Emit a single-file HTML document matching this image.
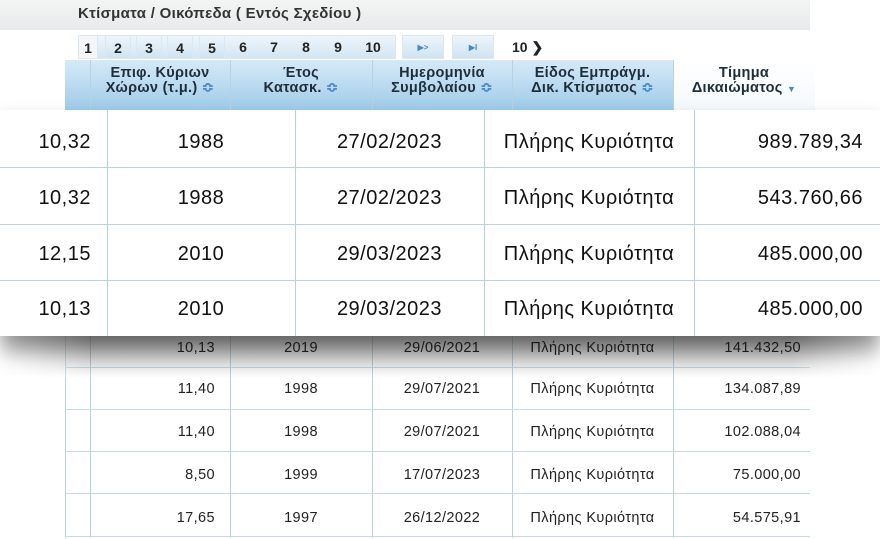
<!DOCTYPE html>
<html><head><meta charset="utf-8"><style>
*{margin:0;padding:0;box-sizing:border-box}
body{width:880px;height:539px;overflow:hidden;background:#fff;position:relative;font-family:"Liberation Sans",Arial,sans-serif;color:#222}
.a{position:absolute}
.title{left:0;top:0;width:810px;height:30px;background:linear-gradient(#f3f4f4,#e8eaeb)}
.title span{position:absolute;left:78px;top:5px;font-size:15px;font-weight:bold;color:#333;letter-spacing:.3px}
.pg{top:35px;height:24px;font-size:14px;font-weight:bold;text-align:center;line-height:24px;background:linear-gradient(#eef5fb,#cfe3f2);border:1px solid #dbe8f2}
.hd{left:65px;top:60px;width:745px;height:50px;background:linear-gradient(#d6eaf8,#9fcbe9)}
.hc{top:66px;font-size:14.5px;font-weight:bold;text-align:center;line-height:15px;color:#1e2d3a;letter-spacing:.3px}
.vl{width:1px;background:#b9d2e0}
.bt{font-size:14.5px;color:#222;letter-spacing:.4px}
.hl{height:1px;background:#c4dbe6}
.card{left:0;top:110px;width:880px;height:226px;background:#fff;box-shadow:0 14px 20px rgba(0,0,0,.4)}
.ct{font-size:20px;color:#111;position:absolute;letter-spacing:.5px}
</style></head><body>
<div class="a title"><span>Κτίσματα / Οικόπεδα ( Εντός Σχεδίου )</span></div>
<div class="a pg" style="left:78px;width:318px;background:linear-gradient(#eef5fb,#d3e6f4)"></div>
<div class="a pg" style="left:78px;width:20px;background:#f4f6f7">1</div>
<div class="a pg" style="left:105px;width:26px">2</div>
<div class="a pg" style="left:136px;width:26px">3</div>
<div class="a pg" style="left:167px;width:26px">4</div>
<div class="a pg" style="left:199px;width:26px">5</div>
<div class="a pg" style="left:230px;width:26px;border:none;background:none">6</div>
<div class="a pg" style="left:261px;width:26px;border:none;background:none">7</div>
<div class="a pg" style="left:293px;width:26px;border:none;background:none">8</div>
<div class="a pg" style="left:325px;width:26px;border:none;background:none">9</div>
<div class="a pg" style="left:357px;width:32px;border:none;background:none">10</div>
<div class="a pg" style="left:402px;width:42px;font-size:8px;color:#4a88c8">▶&gt;</div>
<div class="a pg" style="left:452px;width:42px;font-size:8px;color:#4a88c8">▶I</div>
<div class="a pg" style="left:512px;width:50px;background:#fff;border:none;text-align:left">10 ❯</div>
<div class="a hd"></div>
<div class="a" style="left:673px;top:60px;width:142px;height:50px;background:linear-gradient(#fff,#f4f9fd)"></div>
<div class="a vl" style="left:90px;top:60px;height:50px"></div>
<div class="a vl" style="left:230px;top:60px;height:50px"></div>
<div class="a vl" style="left:372px;top:60px;height:50px"></div>
<div class="a vl" style="left:512px;top:60px;height:50px"></div>
<div class="a vl" style="left:673px;top:60px;height:50px"></div>
<div class="a hc" style="left:90px;width:140px">Επιφ. Κύριων<br>Χώρων (τ.μ.) <span style="color:#4a88c8">≎</span></div>
<div class="a hc" style="left:230px;width:142px">Έτος<br>Κατασκ. <span style="color:#4a88c8">≎</span></div>
<div class="a hc" style="left:372px;width:140px">Ημερομηνία<br>Συμβολαίου <span style="color:#4a88c8">≎</span></div>
<div class="a hc" style="left:512px;width:161px">Είδος Εμπράγμ.<br>Δικ. Κτίσματος <span style="color:#4a88c8">≎</span></div>
<div class="a hc" style="left:673px;width:142px">Τίμημα<br>Δικαιώματος <span style="color:#4a88c8;font-size:9px">▼</span></div>

<div class="a vl" style="left:65px;top:336px;height:202px"></div>
<div class="a vl" style="left:90px;top:336px;height:202px"></div>
<div class="a vl" style="left:230px;top:336px;height:202px"></div>
<div class="a vl" style="left:372px;top:336px;height:202px"></div>
<div class="a vl" style="left:512px;top:336px;height:202px"></div>
<div class="a vl" style="left:673px;top:336px;height:202px"></div>
<div class="a hl" style="left:65px;top:367px;width:745px"></div>
<div class="a hl" style="left:65px;top:409px;width:745px"></div>
<div class="a hl" style="left:65px;top:451px;width:745px"></div>
<div class="a hl" style="left:65px;top:493px;width:745px"></div>
<div class="a hl" style="left:65px;top:536px;width:745px"></div>
<div class="a" style="left:0;top:336px;width:880px;height:42px;background:linear-gradient(rgba(110,110,110,.6),rgba(255,255,255,0))"></div>
<div class="a" style="left:0;top:336px;width:90px;height:42px;background:linear-gradient(90deg,#fff,rgba(255,255,255,0))"></div>
<div class="a" style="left:790px;top:336px;width:90px;height:42px;background:linear-gradient(90deg,rgba(255,255,255,0),#fff)"></div>

<div class="a bt" style="left:90px;top:340px;width:125px;text-align:right">
<div style="height:41px">10,13</div><div style="height:43px">11,40</div><div style="height:43px">11,40</div><div style="height:43px">8,50</div><div>17,65</div></div>
<div class="a bt" style="left:230px;top:340px;width:142px;text-align:center">
<div style="height:41px">2019</div><div style="height:43px">1998</div><div style="height:43px">1998</div><div style="height:43px">1999</div><div>1997</div></div>
<div class="a bt" style="left:372px;top:340px;width:140px;text-align:center">
<div style="height:41px">29/06/2021</div><div style="height:43px">29/07/2021</div><div style="height:43px">29/07/2021</div><div style="height:43px">17/07/2023</div><div>26/12/2022</div></div>
<div class="a bt" style="left:512px;top:340px;width:161px;text-align:center">
<div style="height:41px">Πλήρης Κυριότητα</div><div style="height:43px">Πλήρης Κυριότητα</div><div style="height:43px">Πλήρης Κυριότητα</div><div style="height:43px">Πλήρης Κυριότητα</div><div>Πλήρης Κυριότητα</div></div>
<div class="a bt" style="left:673px;top:340px;width:128px;text-align:right">
<div style="height:41px">141.432,50</div><div style="height:43px">134.087,89</div><div style="height:43px">102.088,04</div><div style="height:43px">75.000,00</div><div>54.575,91</div></div>

<div class="a card">
<div class="a" style="left:107px;top:0;width:1px;height:226px;background:#b9d2e0"></div>
<div class="a" style="left:295px;top:0;width:1px;height:226px;background:#b9d2e0"></div>
<div class="a" style="left:484px;top:0;width:1px;height:226px;background:#b9d2e0"></div>
<div class="a" style="left:694px;top:0;width:1px;height:226px;background:#b9d2e0"></div>
<div class="a" style="left:0;top:57px;width:880px;height:1px;background:#b9d2e0"></div>
<div class="a" style="left:0;top:114px;width:880px;height:1px;background:#b9d2e0"></div>
<div class="a" style="left:0;top:170px;width:880px;height:1px;background:#b9d2e0"></div>

<div class="ct" style="left:0;top:21px;width:91px;text-align:right">10,32</div>
<div class="ct" style="left:107px;top:21px;width:188px;text-align:center">1988</div>
<div class="ct" style="left:295px;top:21px;width:189px;text-align:center">27/02/2023</div>
<div class="ct" style="left:484px;top:21px;width:210px;text-align:center">Πλήρης Κυριότητα</div>
<div class="ct" style="left:694px;top:21px;width:169px;text-align:right">989.789,34</div>

<div class="ct" style="left:0;top:77px;width:91px;text-align:right">10,32</div>
<div class="ct" style="left:107px;top:77px;width:188px;text-align:center">1988</div>
<div class="ct" style="left:295px;top:77px;width:189px;text-align:center">27/02/2023</div>
<div class="ct" style="left:484px;top:77px;width:210px;text-align:center">Πλήρης Κυριότητα</div>
<div class="ct" style="left:694px;top:77px;width:169px;text-align:right">543.760,66</div>

<div class="ct" style="left:0;top:133px;width:91px;text-align:right">12,15</div>
<div class="ct" style="left:107px;top:133px;width:188px;text-align:center">2010</div>
<div class="ct" style="left:295px;top:133px;width:189px;text-align:center">29/03/2023</div>
<div class="ct" style="left:484px;top:133px;width:210px;text-align:center">Πλήρης Κυριότητα</div>
<div class="ct" style="left:694px;top:133px;width:169px;text-align:right">485.000,00</div>

<div class="ct" style="left:0;top:188px;width:91px;text-align:right">10,13</div>
<div class="ct" style="left:107px;top:188px;width:188px;text-align:center">2010</div>
<div class="ct" style="left:295px;top:188px;width:189px;text-align:center">29/03/2023</div>
<div class="ct" style="left:484px;top:188px;width:210px;text-align:center">Πλήρης Κυριότητα</div>
<div class="ct" style="left:694px;top:188px;width:169px;text-align:right">485.000,00</div>
</div>
</body></html>
